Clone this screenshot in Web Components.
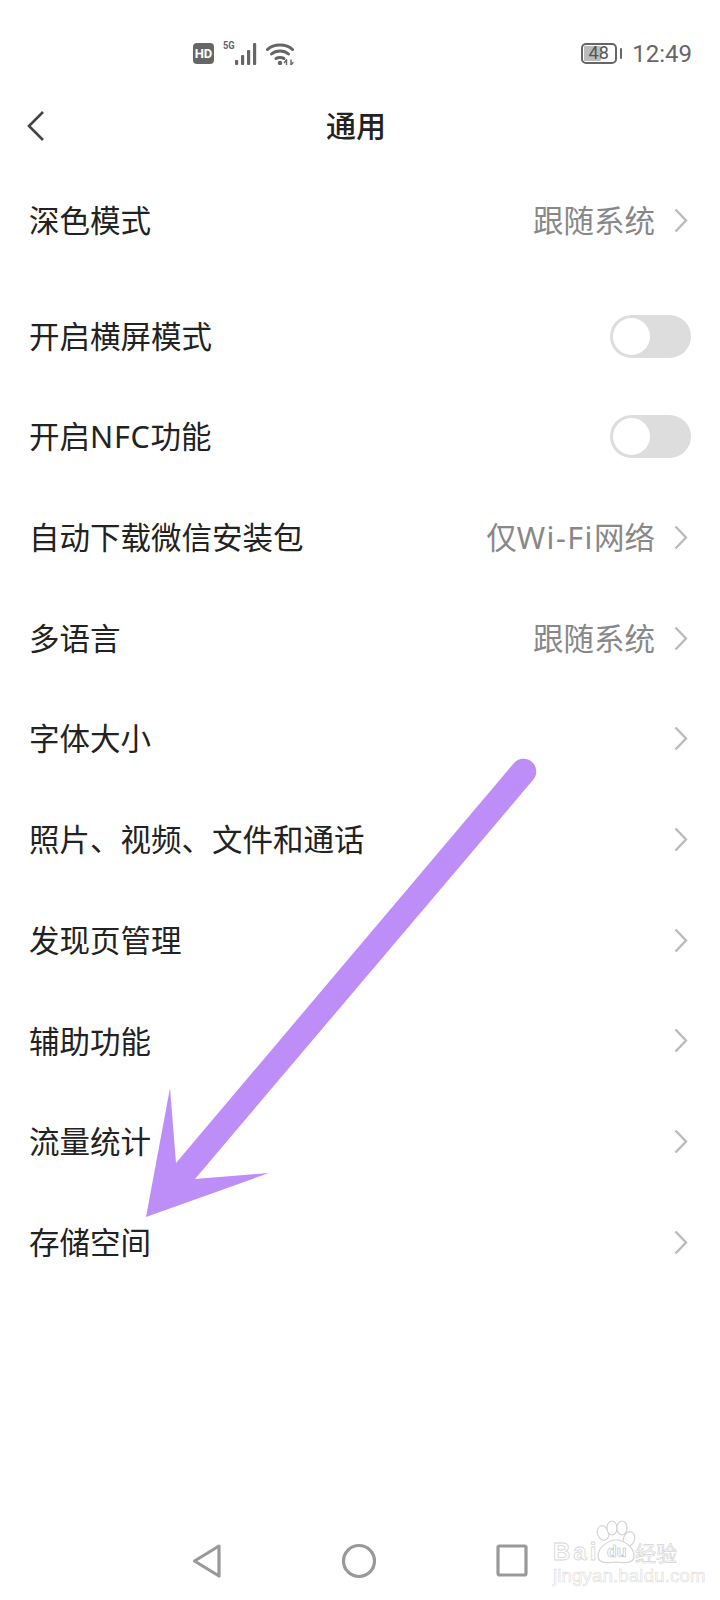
<!DOCTYPE html>
<html lang="zh"><head><meta charset="utf-8"><title>通用</title>
<style>
html,body{margin:0;padding:0;background:#fff}
body{font-family:"Noto Sans CJK SC","Noto Sans",sans-serif;width:720px;height:1600px;overflow:hidden}
settings-page{width:720px;height:1600px}
</style></head><body>
<settings-page>
  <status-bar slot="status"></status-bar>
  <nav-header slot="header">通用</nav-header>
  <setting-row label="深色模式" value="跟随系统" chevron style="margin-bottom:15px"></setting-row>
  <setting-row label="开启横屏模式" toggle></setting-row>
  <setting-row label="开启<span style='letter-spacing:.7px'>NFC</span>功能" toggle></setting-row>
  <setting-row label="自动下载微信安装包" value="仅<span style='letter-spacing:1.5px'>Wi-Fi</span>网络" chevron></setting-row>
  <setting-row label="多语言" value="跟随系统" chevron></setting-row>
  <setting-row label="字体大小" chevron></setting-row>
  <setting-row label="照片、视频、文件和通话" chevron></setting-row>
  <setting-row label="发现页管理" chevron></setting-row>
  <setting-row label="辅助功能" chevron></setting-row>
  <setting-row label="流量统计" chevron></setting-row>
  <setting-row label="存储空间" chevron></setting-row>
  <system-nav slot="nav"></system-nav>
  <arrow-overlay slot="overlay"></arrow-overlay>
  <baidu-mark slot="overlay"></baidu-mark>
</settings-page>
<script>
function def(name, html){
  customElements.define(name, class extends HTMLElement{
    connectedCallback(){
      if(this.shadowRoot) return;
      const r=this.attachShadow({mode:'open'});
      r.innerHTML=typeof html==='function'?html(this):html;
    }
  });
}
def('settings-page',`<style>
:host{display:flex;flex-direction:column;position:relative;background:#fff;box-sizing:border-box}
.list{display:flex;flex-direction:column;flex:1}
</style>
<slot name="status"></slot><slot name="header"></slot>
<div class="list"><slot></slot></div>
<slot name="nav"></slot><slot name="overlay"></slot>`);

def('status-bar',`<style>
:host{display:flex;height:85px;box-sizing:border-box;padding:43px 28px 0 193px;align-items:flex-start;color:#666}
.hd{width:21px;height:21px;background:#666;color:#fff;border-radius:4px;font:700 13px/21px "Roboto",sans-serif;text-align:center}
.net{position:relative;width:36px;height:22px;margin-left:9px;flex:none}
.g{position:absolute;left:0;top:-3px;font:700 11px/12px "Roboto",sans-serif;color:#666;transform:scaleX(.85);transform-origin:left}
svg{display:block;flex:none}
.sp{flex:1}
.bat{position:relative;width:36px;height:21px;box-sizing:border-box;border:2.5px solid #666;border-radius:5px;font:400 18px/16px "Roboto",sans-serif;text-align:center;color:#555}
.bat i{position:absolute;left:1px;top:1px;bottom:1px;width:17px;background:#bbb;border-radius:1px}
.bat span{position:relative}
.tip{width:2.5px;height:11px;background:#666;margin:5px 0 0 3px;border-radius:1px}
.time{font:400 24px/22px "Roboto",sans-serif;color:#666;margin-left:10px}
</style>
<div class="hd">HD</div>
<div class="net"><span class="g">5G</span>
<svg width="36" height="22" viewBox="0 0 36 22" fill="#666"><rect x="12" y="17" width="3.200" height="5" rx="1"/><rect x="18" y="12" width="3.200" height="10" rx="1"/><rect x="24" y="7" width="3.200" height="15" rx="1"/><rect x="30" y="0" width="3.200" height="22" rx="1"/></svg></div>
<svg width="28" height="22" viewBox="0 0 28 22" style="margin-left:7px" fill="none" stroke="#666" stroke-width="3" stroke-linecap="round"><path d="M1.500 6.500C7.500 .5 20.500 .5 26.500 6.500"/><path d="M5.500 11C10 7 18 7 22.500 11"/><path d="M10 15.500C12 14 16 14 18 15.500"/><circle cx="14" cy="20" r="2.200" fill="#666" stroke="none"/><path d="M20.500 17v5M25 17v5" stroke-width="1.400"/><path d="M18.500 19.500l2-2.500M27 19.500l-2 2.500" stroke-width="1.400"/></svg>
<div class="sp"></div>
<div class="bat"><i></i><span>48</span></div><div class="tip"></div>
<div class="time">12:49</div>`);

def('nav-header',`<style>
:host{display:flex;height:85px;box-sizing:border-box;padding:0 8px 8px 0;align-items:center;justify-content:center;position:relative;font:500 30px/1 "Noto Sans CJK SC",sans-serif;color:#222}
svg{position:absolute;left:26px;top:25px}
</style>
<svg width="20" height="32" viewBox="0 0 20 32" fill="none" stroke="#444" stroke-width="2.600"><path d="M17 2 3 16l14 14"/></svg>
<slot></slot>`);

const chev=`<svg class="c" width="14" height="25" viewBox="0 0 14 25" fill="none" stroke="#bbb" stroke-width="2.400"><path d="M1.500 1.500 12 12.500 1.500 23.500"/></svg>`;
def('setting-row',h=>`<style>
:host{display:flex;height:100.700px;flex:none;align-items:center;box-sizing:border-box;padding:0 32px 0 29px;font:400 30.500px/1.2 "Noto Sans","Noto Sans CJK SC",sans-serif;color:#222}
.l{flex:1;white-space:nowrap}
.v{color:#888;margin-right:19px;white-space:nowrap}
.t{width:81px;height:43px;margin-right:-3px;background:#ddd;border-radius:22px;position:relative}
.t i{position:absolute;left:3px;top:3px;width:37px;height:37px;background:#fff;border-radius:50%}
svg{display:block}
</style>
<span class="l">${h.getAttribute('label')}</span>
${h.hasAttribute('value')?`<span class="v">${h.getAttribute('value')}</span>`:''}
${h.hasAttribute('chevron')?chev:''}
${h.hasAttribute('toggle')?'<div class="t"><i></i></div>':''}`);

def('system-nav',`<style>
:host{display:flex;height:60px;box-sizing:border-box;padding:0 192px 19px;justify-content:space-between;align-items:center}
svg{display:block}
</style>
<svg width="30" height="36" viewBox="0 0 30 36" fill="none" stroke="#999" stroke-width="3.200" stroke-linejoin="round"><path d="M27 3 2.500 18 27 33Z"/></svg>
<svg width="36" height="36" viewBox="0 0 36 36" fill="none" stroke="#999" stroke-width="3.200"><circle cx="18" cy="18" r="15.500"/></svg>
<svg width="32" height="33" viewBox="0 0 32 33" fill="none" stroke="#999" stroke-width="3.200" stroke-linejoin="round"><rect x="2" y="2" width="28" height="29" rx="1.500"/></svg>`);

def('arrow-overlay',`<style>
:host{position:absolute;left:0;top:0;width:720px;height:1600px;pointer-events:none}
svg{display:block}
</style>
<svg width="720" height="1600" viewBox="0 0 720 1600"><path fill="#bd8ef8" d="M146 1217 170 1088 176 1163 514 763A12.500 12.500 0 0 1 533 780L195 1179 269 1173Z"/></svg>`);

def('baidu-mark',`<style>
:host{position:absolute;left:550px;top:1520px;width:140px;height:66px;color:#fff}
span{position:absolute;white-space:nowrap}
svg{position:absolute;left:0;top:0}
.b{left:3px;top:20px;font:700 24px/24px "Liberation Sans",sans-serif;letter-spacing:3px;-webkit-text-stroke:.8px #d8d8d8}
.d{left:57px;top:24px;font:700 16px/16px "Liberation Sans",sans-serif;-webkit-text-stroke:.6px #bbb}
.j{left:85px;top:18px;font:400 21px/28px "Noto Sans CJK SC",sans-serif;-webkit-text-stroke:.7px #d4d4d4}
.u{left:3px;top:46px;font:400 18.500px/20px "Liberation Sans",sans-serif;-webkit-text-stroke:.6px #ddd;letter-spacing:.2px}
</style>
<svg width="140" height="50" viewBox="0 0 140 50" fill="#fff" stroke="#d4d4d4" stroke-width="1.200"><ellipse cx="53" cy="13" rx="5.500" ry="7.500" transform="rotate(-20 53 13)"/><ellipse cx="62" cy="8" rx="5" ry="7"/><ellipse cx="72" cy="8" rx="5" ry="7"/><ellipse cx="79" cy="19" rx="5.500" ry="7.500" transform="rotate(20 79 19)"/><path d="M48 36C48 27 59 20 66 20 74 20 84 27 84 36 84 44 74 43 66 42 58 43 48 44 48 36Z"/></svg>
<span class="b">Bai</span><span class="d">du</span><span class="j">经验</span><span class="u">jingyan.baidu.com</span>`);
</script>
</body></html>
